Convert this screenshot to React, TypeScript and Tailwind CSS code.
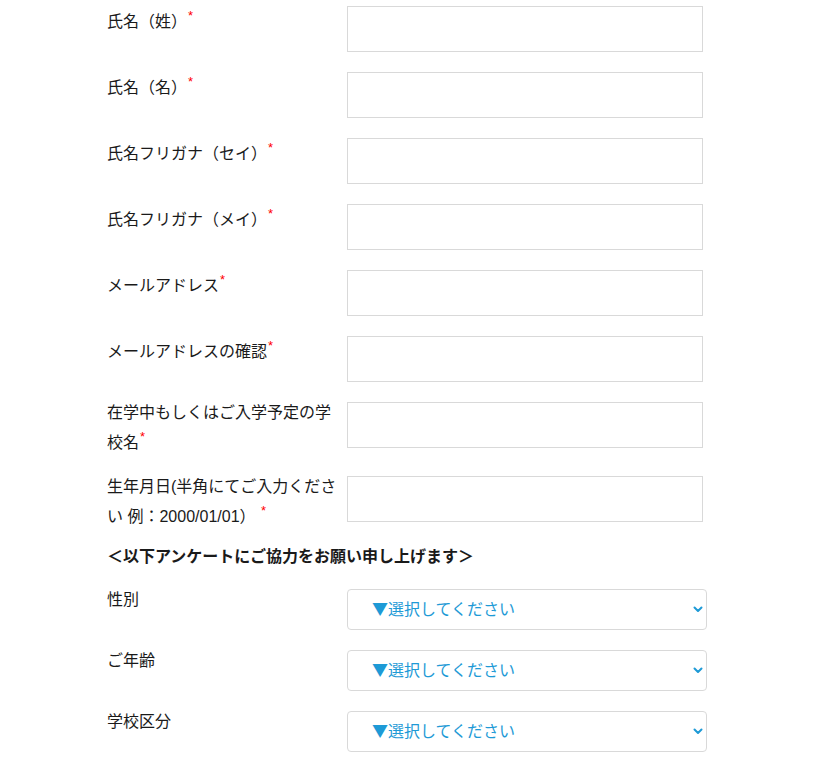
import React from "react";

const Req = ({ space = false }: { space?: boolean }) => (
  <>
    {space ? " " : ""}
    <span className="inline-block align-top text-[13px] leading-[13px] text-[#ff0000] relative top-[2px] ml-[1px]">*</span>
  </>
);

type RowProps = {
  label: React.ReactNode;
  multi?: boolean;
  className?: string;
};

const InputRow = ({ label, multi = false, className = "" }: RowProps) => (
  <div className={`flex items-start ${className}`}>
    <div className={`w-[240px] shrink-0 text-[16px] leading-[30px] ${multi ? "mt-0" : "mt-[1px]"}`}>{label}</div>
    <input
      type="text"
      className={`block w-[356px] h-[46px] border border-[#d9d9d9] bg-white outline-none ${multi ? "mt-[4px]" : "mt-0"}`}
    />
  </div>
);

const SelectRow = ({ label, className = "" }: { label: string; className?: string }) => (
  <div className={`flex items-start ${className}`}>
    <div className="w-[240px] shrink-0 text-[16px] leading-[30px]">{label}</div>
    <div className="relative mt-[4px] w-[360px] h-[41px]">
      <select
        className="appearance-none block w-full h-full rounded-[4px] border border-[#d9d9d9] bg-white pl-[24px] pb-[3px] text-[16px] text-[#1e9ad6] outline-none"
        style={{ fontFamily: '"Noto Sans CJK JP", sans-serif' }}
      >
        <option>▼選択してください</option>
      </select>
      <svg
        className="pointer-events-none absolute right-[4px] top-[17px]"
        width="10"
        height="7"
        viewBox="0 0 10 7"
        fill="none"
      >
        <path d="M1.5 1.5 L5 5 L8.5 1.5" stroke="#1e9ad6" strokeWidth="2" strokeLinecap="round" strokeLinejoin="round" />
      </svg>
    </div>
  </div>
);

export default function App() {
  return (
    <div
      className="min-h-[763px] w-[822px] bg-white text-[#1a1a1a]"
      style={{ fontFamily: '"Liberation Sans", "Noto Sans CJK JP", sans-serif' }}
    >
      <div className="pl-[107px] pt-[6px]">
        <InputRow label={<>氏名（姓）<Req /></>} className="mb-[20px]" />
        <InputRow label={<>氏名（名）<Req /></>} className="mb-[20px]" />
        <InputRow label={<>氏名フリガナ（セイ）<Req /></>} className="mb-[20px]" />
        <InputRow label={<>氏名フリガナ（メイ）<Req /></>} className="mb-[20px]" />
        <InputRow label={<>メールアドレス<Req /></>} className="mb-[20px]" />
        <InputRow label={<>メールアドレスの確認<Req /></>} className="mb-[16px]" />
        <InputRow
          multi
          label={<>在学中もしくはご入学予定の学<br />校名<Req /></>}
          className="mb-[14px]"
        />
        <InputRow
          multi
          label={<>生年月日(半角にてご入力くださ<br />い 例：2000/01/01）<Req space /></>}
          className="mb-[10px]"
        />
        <div className="text-[16px] leading-[30px] font-bold mb-[13px]">
          ＜以下アンケートにご協力をお願い申し上げます＞
        </div>
        <SelectRow label="性別" className="mb-[16px]" />
        <SelectRow label="ご年齢" className="mb-[16px]" />
        <SelectRow label="学校区分" />
      </div>
    </div>
  );
}
